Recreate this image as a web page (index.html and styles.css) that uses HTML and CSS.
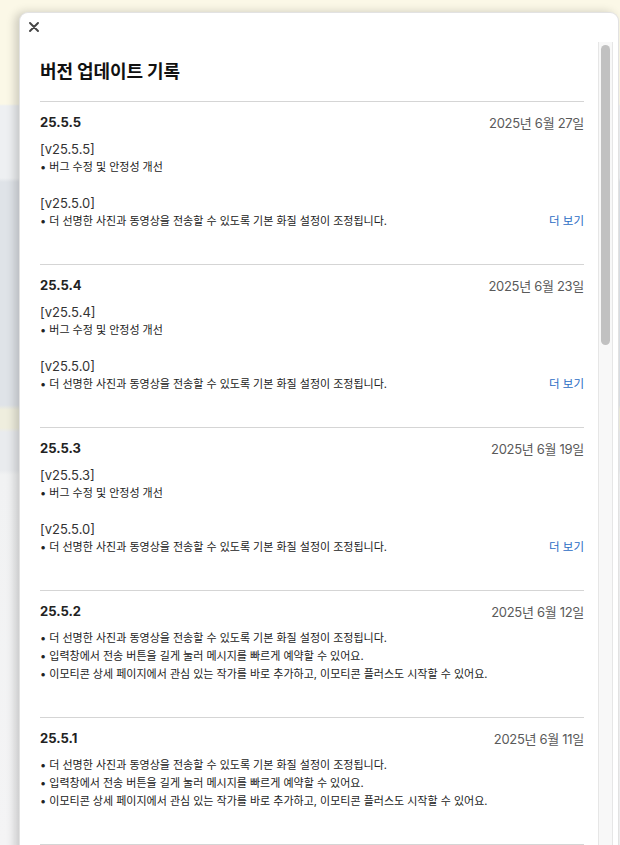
FILE: index.html
```html
<!DOCTYPE html>
<html lang="ko">
<head>
<meta charset="utf-8">
<title>버전 업데이트 기록</title>
<link rel="stylesheet" href="styles.css">
</head>
<body>
<div class="backdrop">
  <div class="modal">
    <div class="modal-top">
      <button class="close" aria-label="닫기">
        <svg width="10" height="10" viewBox="0 0 10 10"><path d="M1 1L9 9M9 1L1 9" stroke="#444" stroke-width="1.9" stroke-linecap="round"/></svg>
      </button>
    </div>
    <div class="modal-body">
      <div class="content">
        <h1 class="title">버전 업데이트 기록</h1>

        <section class="release">
          <div class="release-head"><span class="ver">25.5.5</span><span class="date">2025년 6월 27일</span></div>
          <div class="notes">
            <div class="tag">[v25.5.5]</div>
            <div class="item">• 버그 수정 및 안정성 개선</div>
            <div class="blank"></div>
            <div class="tag">[v25.5.0]</div>
            <div class="item row"><span>• 더 선명한 사진과 동영상을 전송할 수 있도록 기본 화질 설정이 조정됩니다.</span><a class="more" href="#">더 보기</a></div>
          </div>
        </section>

        <section class="release">
          <div class="release-head"><span class="ver">25.5.4</span><span class="date">2025년 6월 23일</span></div>
          <div class="notes">
            <div class="tag">[v25.5.4]</div>
            <div class="item">• 버그 수정 및 안정성 개선</div>
            <div class="blank"></div>
            <div class="tag">[v25.5.0]</div>
            <div class="item row"><span>• 더 선명한 사진과 동영상을 전송할 수 있도록 기본 화질 설정이 조정됩니다.</span><a class="more" href="#">더 보기</a></div>
          </div>
        </section>

        <section class="release">
          <div class="release-head"><span class="ver">25.5.3</span><span class="date">2025년 6월 19일</span></div>
          <div class="notes">
            <div class="tag">[v25.5.3]</div>
            <div class="item">• 버그 수정 및 안정성 개선</div>
            <div class="blank"></div>
            <div class="tag">[v25.5.0]</div>
            <div class="item row"><span>• 더 선명한 사진과 동영상을 전송할 수 있도록 기본 화질 설정이 조정됩니다.</span><a class="more" href="#">더 보기</a></div>
          </div>
        </section>

        <section class="release">
          <div class="release-head"><span class="ver">25.5.2</span><span class="date">2025년 6월 12일</span></div>
          <div class="notes">
            <div class="item">• 더 선명한 사진과 동영상을 전송할 수 있도록 기본 화질 설정이 조정됩니다.</div>
            <div class="item">• 입력창에서 전송 버튼을 길게 눌러 메시지를 빠르게 예약할 수 있어요.</div>
            <div class="item">• 이모티콘 상세 페이지에서 관심 있는 작가를 바로 추가하고, 이모티콘 플러스도 시작할 수 있어요.</div>
          </div>
        </section>

        <section class="release">
          <div class="release-head"><span class="ver">25.5.1</span><span class="date">2025년 6월 11일</span></div>
          <div class="notes">
            <div class="item">• 더 선명한 사진과 동영상을 전송할 수 있도록 기본 화질 설정이 조정됩니다.</div>
            <div class="item">• 입력창에서 전송 버튼을 길게 눌러 메시지를 빠르게 예약할 수 있어요.</div>
            <div class="item">• 이모티콘 상세 페이지에서 관심 있는 작가를 바로 추가하고, 이모티콘 플러스도 시작할 수 있어요.</div>
          </div>
        </section>

        <div class="release-end"></div>
      </div>
      <div class="scrollbar"><div class="thumb"></div></div>
    </div>
  </div>
</div>
</body>
</html>
```

FILE: styles.css
```css
* { box-sizing: border-box; }
html, body { margin: 0; padding: 0; }
body {
  width: 620px;
  height: 845px;
  overflow: hidden;
  font-family: "Inter", "Noto Sans CJK KR", sans-serif;
  color: #222;
}
.backdrop {
  height: 845px;
  overflow: hidden;
  padding: 12px 1px 0 19px;
  background:
    linear-gradient(to bottom,
      #fbf8e7 0, #fbf8e7 104px,
      #eef0f2 106px, #eef0f2 178px,
      #dfe3e8 182px, #dfe3e8 405px,
      #efeede 410px, #efeede 428px,
      #e9ebee 432px, #e9ebee 470px,
      #f1f2f3 475px, #f4f4f5 845px);
}
.modal {
  background: #fff;
  border-radius: 9px 9px 0 0;
  border: 1px solid #e2e2e2;
  border-bottom: none;
  box-shadow: -4px 0 10px rgba(0,0,0,0.18);
  height: 900px;
  display: flex;
  flex-direction: column;
}
.modal-top {
  height: 29px;
  display: flex;
  align-items: flex-start;
}
.close {
  border: none;
  background: none;
  padding: 0;
  margin: 9px 0 0 9px;
  width: 10px;
  height: 10px;
  display: flex;
  cursor: pointer;
}
.modal-body {
  display: flex;
  flex: 1;
}
.content {
  width: 564px;
  padding-left: 20px;
}
.title {
  margin: 18px 0 17px;
  font-size: 18px;
  line-height: 24px;
  font-weight: 700;
  letter-spacing: -0.1px;
  color: #111;
}
.release {
  border-top: 1px solid #d5d5d5;
  padding: 11px 0 34px;
}
.release-end {
  border-top: 1px solid #d5d5d5;
}
.release-head {
  display: flex;
  justify-content: space-between;
  align-items: center;
  height: 18px;
  margin-bottom: 9px;
}
.ver {
  font-size: 13px;
  font-weight: 700;
  color: #222;
}
.date {
  font-size: 13px;
  color: #5a5a5a;
  letter-spacing: -0.3px;
}
.notes {
  line-height: 18px;
}
.tag {
  font-size: 13px;
  color: #333;
  height: 18px;
}
.item {
  font-size: 11px;
  color: #222;
  height: 18px;
  letter-spacing: 0;
}
.blank { height: 18px; }
.row {
  display: flex;
  justify-content: space-between;
}
.more {
  color: #2b6cc4;
  text-decoration: none;
  font-size: 11.5px;
}
.scrollbar {
  margin-left: 14px;
  width: 15px;
  background: #f8f8f8;
  border-left: 1px solid #e6e6e6;
  border-right: 1px solid #e6e6e6;
  padding: 3px 2px 0;
}
.thumb {
  height: 300px;
  background: #c1c1c1;
  border-radius: 5px;
}
```
